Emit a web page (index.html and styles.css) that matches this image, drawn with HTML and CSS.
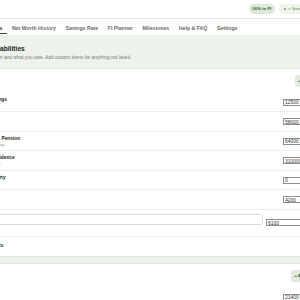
FILE: index.html
```html
<!DOCTYPE html>
<html lang="en">
<head>
  <meta charset="UTF-8">
  <meta name="viewport" content="width=device-width, initial-scale=1.0">
  <title>FI Tracker</title>
  <link rel="stylesheet" href="styles.css">
</head>
<body>
  <div class="app">
    <header class="topbar">
      <div class="brand">FI Tracker</div>
      <div class="status">
        <span class="pill pill-fi">16% to FI</span>
        <span class="pill pill-saved"><span class="dot"></span>✓ Saved to this browser</span>
      </div>
    </header>

    <nav class="tabs">
      <a href="#" class="tab active">Assets &amp; Liabilities</a>
      <a href="#" class="tab">Net Worth History</a>
      <a href="#" class="tab">Savings Rate</a>
      <a href="#" class="tab">FI Planner</a>
      <a href="#" class="tab">Milestones</a>
      <a href="#" class="tab">Help &amp; FAQ</a>
      <a href="#" class="tab">Settings</a>
    </nav>

    <main class="main">
      <h1>Assets &amp; Liabilities</h1>
      <p class="lead">Add what you own and what you owe. Add custom items for anything not listed.</p>

      <section class="card">
        <div class="card-head">
          <h2>Assets</h2>
          <button class="add">+ Add asset</button>
        </div>
        <div class="row">
          <div class="name"><div class="label">Cash savings</div><div class="sub">Easy access</div></div>
          <input class="amount" type="text" value="12500">
        </div>
        <div class="row">
          <div class="name"><div class="label">ISAs</div></div>
          <input class="amount" type="text" value="58000">
        </div>
        <div class="row">
          <div class="name"><div class="label">Workplace Pension</div><div class="sub">Pot value today</div></div>
          <input class="amount" type="text" value="64000">
        </div>
        <div class="row">
          <div class="name"><div class="label">Home Residence</div><div class="sub">Current value</div></div>
          <input class="amount" type="text" value="310000">
        </div>
        <div class="row">
          <div class="name"><div class="label">2nd Property</div><div class="sub">Equity</div></div>
          <input class="amount" type="text" value="0">
        </div>
        <div class="row">
          <div class="name"><div class="label">Vehicles</div><div class="sub">Resale value</div></div>
          <input class="amount" type="text" value="4200">
        </div>
        <div class="row custom">
          <div class="name grow">
            <input class="name-input" type="text" value="Crypto">
            <div class="sub">Custom item</div>
          </div>
          <input class="amount" type="text" value="6100">
          <button class="remove">×</button>
        </div>
        <div class="row total">
          <div class="label">Total assets</div>
          <div class="label">£454,800</div>
        </div>
      </section>

      <section class="card">
        <div class="card-head">
          <h2>Debts</h2>
          <button class="add">+ Add liability</button>
        </div>
        <div class="row">
          <div class="name"><div class="label">Car loan</div></div>
          <input class="amount" type="text" value="21400">
        </div>
        <div class="row">
          <div class="name"><div class="label">Mortgage</div></div>
          <input class="amount" type="text" value="185000">
        </div>
      </section>
    </main>
  </div>
</body>
</html>
```

FILE: styles.css
```css
html,
body {
  margin: 0;
  height: 100%;
  overflow: hidden;
}

body {
  display: flex;
  justify-content: center;
  align-items: flex-start;
  background-color: #eef2ec;
  font-family: "Liberation Sans", Arial, sans-serif;
  color: #222;
}

.app {
  flex: none;
  width: 400px;
}

/* top bar */
.topbar {
  height: 18px;
  padding: 0 13.5px;
  background-color: #fff;
  border-bottom: 1px solid #e4e7e2;
  display: flex;
  align-items: center;
  justify-content: space-between;
}

.brand {
  font-size: 6px;
  font-weight: bold;
  color: #2e5a2e;
}

.status {
  display: flex;
  gap: 4px;
}

.pill {
  height: 10px;
  line-height: 10px;
  padding: 0 3.6px;
  border-radius: 5px;
  font-size: 4.4px;
  white-space: nowrap;
}

.pill-fi {
  background-color: #dde8d8;
  color: #2e5a2e;
  font-weight: bold;
}

.pill-saved {
  display: flex;
  align-items: center;
  gap: 1.5px;
  padding: 0 5px;
  background-color: #eef3ec;
  color: #4f7f4f;
  font-size: 4.1px;
}

.dot {
  width: 2.5px;
  height: 2.5px;
  border-radius: 50%;
  background-color: #5fae5f;
}

/* tabs */
.tabs {
  display: flex;
  height: 16px;
  box-sizing: border-box;
  padding-bottom: 1.5px;
  background-color: #fff;
}

.tab {
  padding: 6px 4.8px 1.5px;
  line-height: 6px;
  font-size: 5.2px;
  font-weight: bold;
  color: #6a6a6a;
  text-decoration: none;
  white-space: nowrap;
  border-bottom: 1px solid transparent;
}

.tab.active {
  color: #222;
  border-bottom-color: #2e5a2e;
}

/* page */
.main {
  padding: 10px 13.5px 0;
}

h1 {
  margin: 0;
  font-size: 6.7px;
  line-height: 8px;
}

.lead {
  margin: 2.2px 0 0;
  font-size: 4.8px;
  line-height: 6px;
  color: #777;
  white-space: nowrap;
}

.card {
  margin-top: 6.8px;
  padding: 0 11.5px;
  background-color: #fff;
  border: 1px solid #e2e6e0;
  border-radius: 3px;
}

.card + .card {
  margin-top: 6px;
}

.card-head {
  height: 24px;
  display: flex;
  align-items: center;
  justify-content: space-between;
}

.card-head h2 {
  margin: 0;
  font-size: 6px;
}

.add {
  height: 12px;
  padding: 0 3px;
  border: none;
  border-radius: 2.5px;
  background-color: #e2eadf;
  color: #2e5a2e;
  font-family: inherit;
  font-size: 4.1px;
  font-weight: bold;
}

.row {
  height: 18.5px;
  display: flex;
  align-items: center;
  justify-content: space-between;
  gap: 3px;
  border-bottom: 1px solid #eceee9;
}

.row.custom {
  height: 26px;
}

.row.total {
  height: 19px;
  border-bottom: none;
}

.name {
  white-space: nowrap;
}

.name.grow {
  flex: 1;
}

.label {
  font-size: 4.8px;
  line-height: 6px;
  font-weight: bold;
}

.sub {
  font-size: 4.1px;
  line-height: 5px;
  color: #888;
}

.amount {
  width: 41px;
  height: 7px;
  box-sizing: border-box;
  padding: 0 1px;
  border: 1px solid #8d8d8d;
  border-radius: 0;
  font-family: inherit;
  font-size: 5px;
  color: #333;
}

.name-input {
  display: block;
  width: 100%;
  height: 11px;
  box-sizing: border-box;
  margin-bottom: 2px;
  padding: 0 3px;
  border: 1px solid #d9dcd6;
  border-radius: 2.5px;
  font-family: inherit;
  font-size: 4.8px;
}

.remove {
  width: 14px;
  height: 10px;
  padding: 0;
  border: none;
  background: none;
  color: #999;
  font-size: 6px;
}
```
